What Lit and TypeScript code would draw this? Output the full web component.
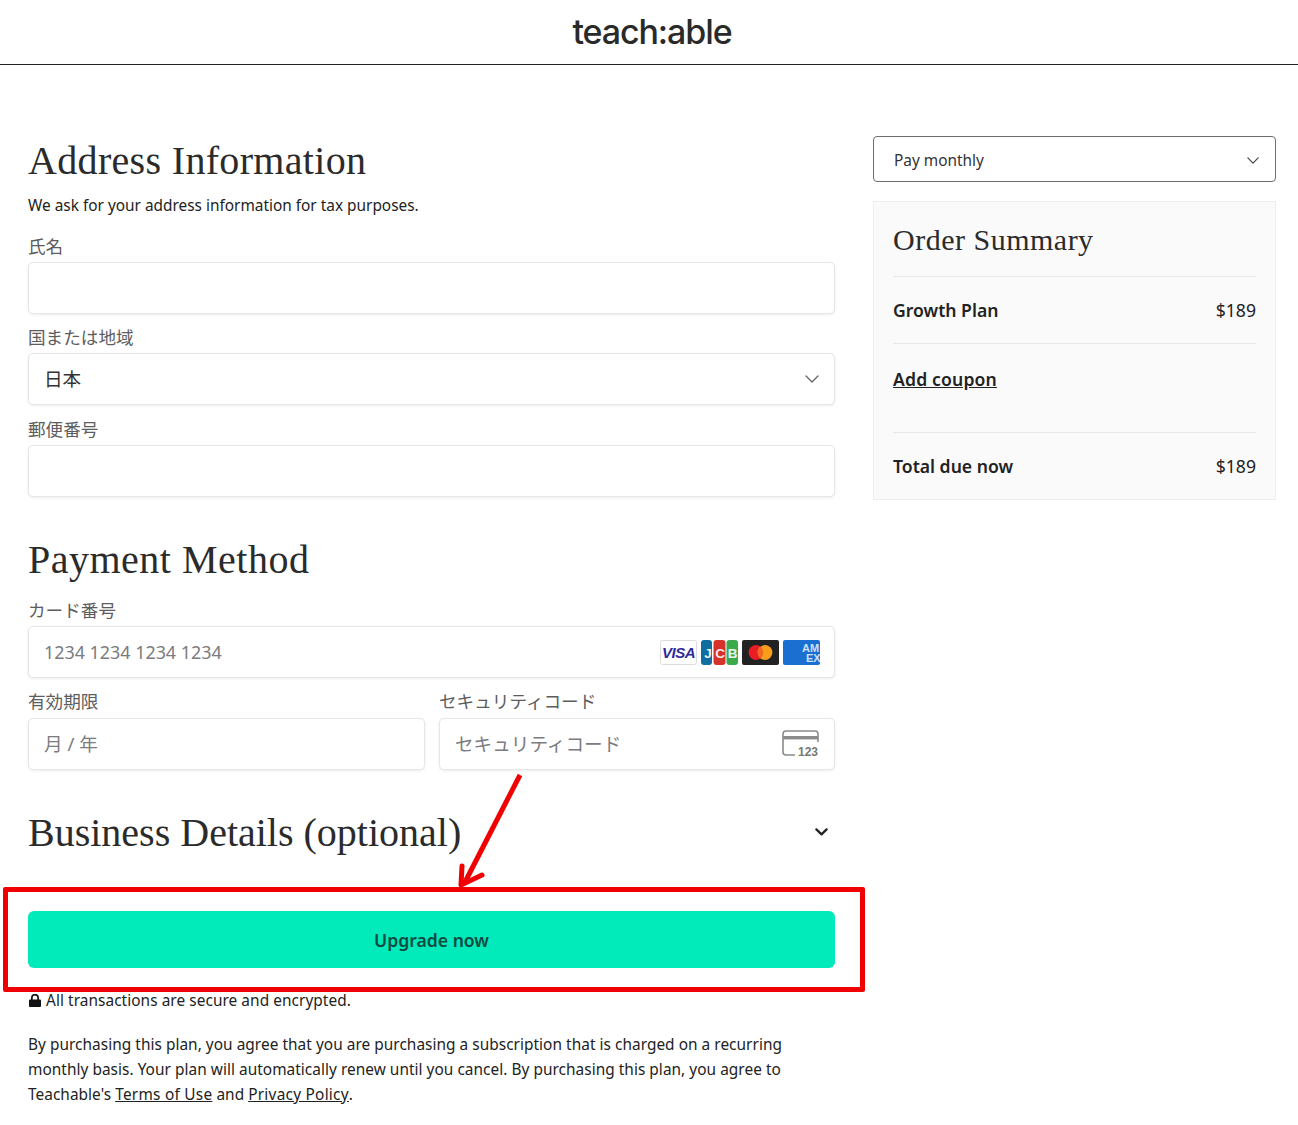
import { LitElement, html, css, svg } from "lit";
import { customElement } from "lit/decorators.js";

const chevron = (cls: string) => html`<svg class=${cls} viewBox="0 0 14 8" fill="none" stroke="currentColor" stroke-width="1.4" stroke-linecap="round" stroke-linejoin="round"><path d="M1 1l6 6 6-6"/></svg>`;

@customElement("app-root")
export class AppRoot extends LitElement {
  static styles = css`
    :host { display: block; position: relative; height: 1125px; background: #fff; color: #1d1d1f; font-family: "Noto Sans", "Noto Sans CJK JP", sans-serif; overflow: hidden; }
    * { box-sizing: border-box; }
    .top { height: 65px; border-bottom: 1px solid #222; display: flex; align-items: center; justify-content: center; padding-left: 6px; }
    .logo { font-family: Inter, sans-serif; font-size: 34px; font-weight: 500; letter-spacing: -1.1px; color: #2a2a2a; line-height: 1; }
    .layout { display: flex; padding: 71px 22px 0 28px; gap: 38px; align-items: flex-start; }
    .left { width: 807px; flex: none; }
    .right { flex: 1; min-width: 0; }
    h1, h2 { font-family: "Liberation Serif", serif; font-weight: 400; margin: 0; color: #2b2b2b; }
    h1 { font-size: 40px; line-height: 50px; }
    .h-addr { letter-spacing: .33px; }
    .h-pay { letter-spacing: .5px; }
    .sub { font-size: 15.4px; line-height: 22px; margin: 9px 0 17.5px; color: #222; }
    .field { margin-bottom: 12.5px; min-width: 0; }
    .field > label { display: block; font-size: 17.6px; line-height: 23.5px; margin-bottom: 3.5px; color: #5d5d60; }
    .two .field > label { margin-top: -1px; margin-bottom: 4.5px; }
    .box { height: 52px; width: 100%; border: 1px solid #e6e6e6; border-radius: 5px; background: #fff; box-shadow: 0 1px 3px rgba(0,0,0,.08); display: flex; align-items: center; padding: 0 15px; gap: 8px; font-size: 18.6px; color: #333; }
    .box input { flex: 1; min-width: 0; border: 0; outline: 0; padding: 0; background: transparent; font: inherit; color: inherit; }
    .box input::placeholder { color: #7b7b80; opacity: 1; }
    .box input.num { font-size: 17.9px; }
    .val { margin-top: -3px; }
    .spacer { flex: 1; }
    .chev-field { width: 14px; height: 8px; color: #666; }
    .section { margin-top: 38.5px; margin-bottom: 14px; }
    .two { display: grid; grid-template-columns: 397px 396px; gap: 14px; }
    .cards { display: flex; gap: 4px; margin-right: -1px; }
    .cards svg { display: block; width: 37px; height: 25px; }
    .cvc { width: 37px; height: 27px; display: block; overflow: visible; }
    .biz { display: flex; align-items: center; justify-content: space-between; margin-top: 25.5px; height: 50px; padding-right: 7px; }
    .biz svg { width: 13px; height: 8px; color: #222; margin-top: -1px; }
    .cta { display: flex; align-items: center; justify-content: center; width: 100%; height: 57px; margin-top: 53px; padding: 1px 0 0; border: 0; border-radius: 6px; background: #00ebb9; color: #0c4a43; font: 600 17.6px "Noto Sans", sans-serif; }
    .secure { display: flex; align-items: center; gap: 5px; margin-top: 22px; padding-left: 1px; font-size: 15.4px; line-height: 22px; color: #222; letter-spacing: .06px; }
    .secure svg { width: 12px; height: 13px; flex: none; }
    .legal { margin: 20px 0 0; font-size: 15.4px; line-height: 25px; color: #222; width: 770px; letter-spacing: .04px; }
    .legal a { color: inherit; text-decoration: underline; letter-spacing: .25px; }
    .plan { height: 46px; border: 1px solid #6e6e6e; border-radius: 4px; display: flex; align-items: center; justify-content: space-between; padding: 2px 16px 0 20px; font-size: 15.4px; color: #333; }
    .plan svg { width: 12px; height: 7px; color: #444; }
    .summary { margin-top: 19px; height: 299px; border: 1px solid #eeeeee; background: #fafafa; padding: 0 19px; display: flex; flex-direction: column; }
    .summary h2 { font-size: 30px; letter-spacing: .5px; height: 75px; padding-top: 1px; flex: none; display: flex; align-items: center; border-bottom: 1px solid #e8e8e8; }
    .row { display: flex; align-items: center; justify-content: space-between; font-size: 17.6px; font-weight: 600; color: #222; border-bottom: 1px solid #e8e8e8; }
    .row span:last-child { font-weight: 400; }
    .row.a { height: 67px; }
    .row.b { height: 89px; align-items: flex-start; padding-top: 23px; }
    .row.c { flex: 1; border: 0; }
    .row a { color: inherit; text-decoration: underline; line-height: 24px; letter-spacing: .15px; }
    .anno { position: absolute; left: 0; top: 0; pointer-events: none; }
    .redbox { position: absolute; left: 3px; top: 887px; width: 862px; height: 105px; border: 5px solid #f00000; border-radius: 2px; pointer-events: none; }
  `;

  render() {
    return html`
      <header class="top"><div class="logo">teach:able</div></header>
      <div class="layout">
        <main class="left">
          <h1 class="h-addr">Address Information</h1>
          <p class="sub">We ask for your address information for tax purposes.</p>
          <div class="field"><label>氏名</label><div class="box"><input /></div></div>
          <div class="field"><label>国または地域</label><div class="box"><span class="val">日本</span><span class="spacer"></span>${chevron("chev-field")}</div></div>
          <div class="field"><label>郵便番号</label><div class="box"><input /></div></div>

          <h1 class="section h-pay">Payment Method</h1>
          <div class="field"><label>カード番号</label>
            <div class="box"><input class="num" placeholder="1234 1234 1234 1234" />
              <div class="cards">${this.visa()}${this.jcb()}${this.mc()}${this.amex()}</div>
            </div>
          </div>
          <div class="two">
            <div class="field"><label>有効期限</label><div class="box"><input placeholder="月 / 年" /></div></div>
            <div class="field"><label>セキュリティコード</label><div class="box"><input placeholder="セキュリティコード" />${this.cvc()}</div></div>
          </div>

          <div class="biz"><h1>Business Details (optional)</h1><svg viewBox="0 0 14 8" fill="none" stroke="currentColor" stroke-width="2.4" stroke-linecap="round" stroke-linejoin="round"><path d="M1.5 1.2L7 6.6l5.5-5.4"/></svg></div>

          <button class="cta">Upgrade now</button>
          <div class="secure"><svg viewBox="0 0 12 13"><path fill="#111" d="M1 5.5h1V3.8a4 4 0 0 1 8 0v1.7h1a1 1 0 0 1 1 1V12a1 1 0 0 1-1 1H1a1 1 0 0 1-1-1V6.500a1 1 0 0 1 1-1zm2.700 0h4.600V3.800a2.300 2.300 0 0 0-4.600 0z"/></svg><span>All transactions are secure and encrypted.</span></div>
          <p class="legal">By purchasing this plan, you agree that you are purchasing a subscription that is charged on a recurring monthly basis. Your plan will automatically renew until you cancel. By purchasing this plan, you agree to Teachable's <a href="#">Terms of Use</a> and <a href="#">Privacy Policy</a>.</p>
        </main>
        <aside class="right">
          <div class="plan"><span>Pay monthly</span>${chevron("")}</div>
          <section class="summary">
            <h2>Order Summary</h2>
            <div class="row a"><span>Growth Plan</span><span>$189</span></div>
            <div class="row b"><a href="#">Add coupon</a></div>
            <div class="row c"><span>Total due now</span><span>$189</span></div>
          </section>
        </aside>
      </div>
      <div class="redbox"></div>
      <svg class="anno" width="1298" height="1125" fill="none" stroke="#f00000" stroke-width="5"><path d="M520 775L464 884"/><path d="M462 866L461 885L482 875" stroke-width="5" stroke-linejoin="round" stroke-linecap="round"/></svg>
    `;
  }

  visa() {
    return html`<svg viewBox="0 0 37 25"><rect x=".5" y=".5" width="36" height="24" rx="2" fill="#fff" stroke="#ddd"/><text x="18.500" y="17.500" text-anchor="middle" font-family="Liberation Sans, sans-serif" font-size="15" font-weight="700" font-style="italic" fill="#2f2a9c" letter-spacing="-.5">VISA</text></svg>`;
  }
  jcb() {
    return html`<svg viewBox="0 0 37 25"><rect width="11" height="25" rx="3" fill="#0f6d9f"/><rect x="12.500" width="12" height="25" rx="3" fill="#d6322c"/><rect x="25.500" width="11.500" height="25" rx="3" fill="#3aaa4a"/>${svg`<g font-family="Liberation Sans, sans-serif" font-size="13.500" font-weight="700" fill="#fff" fill-opacity=".92" text-anchor="middle"><text x="7" y="17.500">J</text><text x="19" y="17.500">C</text><text x="31.500" y="17.500">B</text></g>`}</svg>`;
  }
  mc() {
    return html`<svg viewBox="0 0 37 25"><rect width="37" height="25" rx="2" fill="#222"/><circle cx="14" cy="12.500" r="7.400" fill="#ea1d25"/><circle cx="23" cy="12.500" r="7.400" fill="#f79e1b"/><path d="M18.500 6.700a7.400 7.400 0 0 1 0 11.600a7.400 7.400 0 0 1 0-11.600z" fill="#f26522"/></svg>`;
  }
  amex() {
    return html`<svg viewBox="0 0 37 25"><rect width="37" height="25" rx="2" fill="#1a6fd0"/><g font-family="Liberation Sans, sans-serif" font-size="11" font-weight="700" fill="#fff" fill-opacity=".8"><text x="19" y="11.500">AM</text><text x="23" y="21.500">EX</text></g></svg>`;
  }
  cvc() {
    return html`<svg class="cvc" viewBox="0 0 37 27" fill="none"><path d="M13 25H4a3 3 0 0 1-3-3V4a3 3 0 0 1 3-3h29a3 3 0 0 1 3 3v8" stroke="#8b8b8b" stroke-width="1.600"/><rect x="1" y="6" width="35" height="3.400" fill="#8b8b8b"/><text x="36" y="25.800" text-anchor="end" font-family="Liberation Sans, sans-serif" font-size="12" font-weight="700" fill="#777">123</text></svg>`;
  }
}
